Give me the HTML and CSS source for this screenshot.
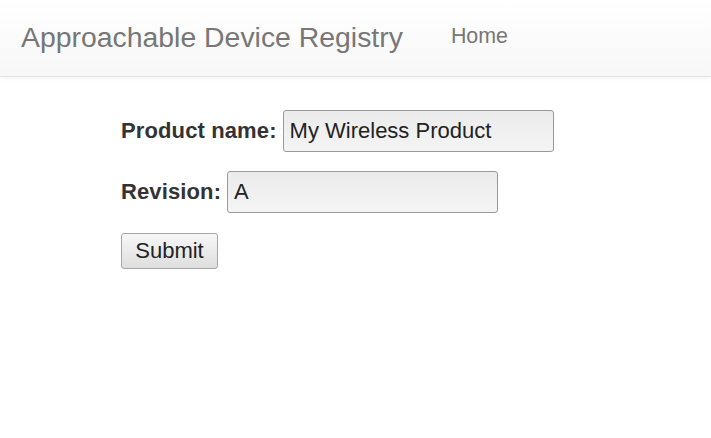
FILE: index.html
```html
<!DOCTYPE html>
<html>
<head>
<meta charset="utf-8">
<title>Approachable Device Registry</title>
<link rel="stylesheet" href="styles.css">
</head>
<body>
<nav class="navbar">
  <a class="brand" href="#">Approachable Device Registry</a>
  <a class="nav-link" href="#">Home</a>
</nav>
<main class="content">
  <form class="form">
    <div class="row">
      <label class="label" for="pn">Product name:</label>
      <input class="field" id="pn" type="text" value="My Wireless Product">
    </div>
    <div class="row">
      <label class="label" for="rev">Revision:</label>
      <input class="field" id="rev" type="text" value="A">
    </div>
    <button class="submit" type="button">Submit</button>
  </form>
</main>
</body>
</html>
```
FILE: styles.css
```css
html, body {
  margin: 0;
  padding: 0;
  background: #fff;
  font-family: "Liberation Sans", Arial, sans-serif;
}
.navbar {
  box-sizing: border-box;
  height: 77px;
  display: flex;
  align-items: center;
  padding-left: 21px;
  background: linear-gradient(to bottom, #ffffff 0%, #f7f7f7 100%);
  border-bottom: 1px solid #e2e2e2;
  box-shadow: 0 1px 5px rgba(0,0,0,0.06);
}
.brand {
  font-size: 28.4px;
  color: #777;
  text-decoration: none;
  margin-top: -2px;
  margin-right: 48px;
}
.nav-link {
  font-size: 21.4px;
  color: #777;
  text-decoration: none;
  margin-top: -4px;
}
.content {
  padding: 33px 0 0 121px;
}
.row {
  display: flex;
  align-items: center;
  margin-bottom: 19px;
}
.label {
  font-weight: bold;
  font-size: 22px;
  letter-spacing: 0.12px;
  color: #333;
  margin-right: 6px;
}
.field {
  box-sizing: border-box;
  width: 271px;
  height: 42px;
  border: 1px solid #9a9a9a;
  border-radius: 3px;
  padding: 0 6px;
  font-family: "Liberation Sans", Arial, sans-serif;
  font-size: 22px;
  color: #222;
  background: linear-gradient(to bottom, #ebebeb 0%, #f4f4f4 100%);
  outline: none;
}
.submit {
  box-sizing: border-box;
  margin-top: 1px;
  width: 97px;
  height: 36px;
  padding: 0;
  border: 1px solid #a6a6a6;
  border-radius: 3px;
  font-family: "Liberation Sans", Arial, sans-serif;
  font-size: 22px;
  color: #222;
  background: linear-gradient(to bottom, #f7f7f7 0%, #dedede 100%);
}
```
